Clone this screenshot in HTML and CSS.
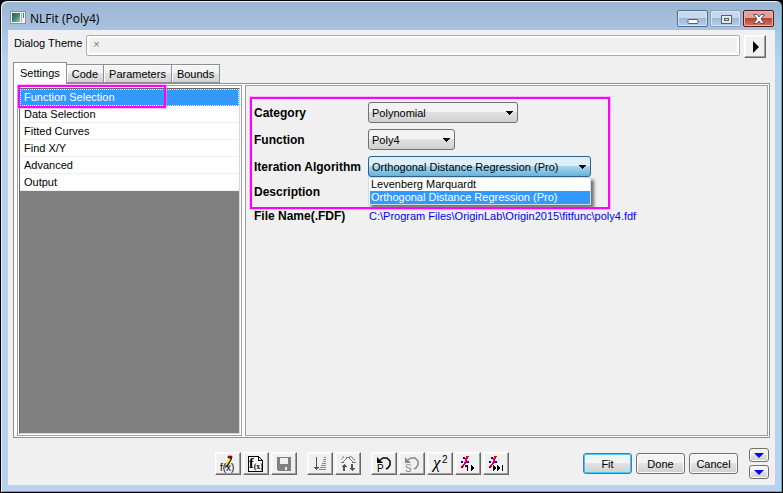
FILE: index.html
```
<!DOCTYPE html>
<html lang="en">
<head>
<meta charset="utf-8">
<title>NLFit (Poly4)</title>
<link rel="stylesheet" href="styles.css">
</head>
<body>
<div class="window">
  <header class="titlebar">
    <svg class="app-icon" width="16" height="13" viewBox="0 0 16 13" shape-rendering="crispEdges">
      <defs><linearGradient id="scene" x2="1" y2="1"><stop offset="0" stop-color="#245a78"/><stop offset=".5" stop-color="#3d8a73"/><stop offset="1" stop-color="#9ccf9a"/></linearGradient></defs>
      <path fill="#f4f4f4" stroke="#8a949c" d="M.5.5h15v12H.5z"/>
      <path fill="url(#scene)" d="M2 2h8v9H2z"/>
      <path fill="#3d7c80" d="M13 2h1v5h-1z"/><path fill="#b0b0b0" d="M11 2h1v9h-1z"/>
    </svg>
    <h1 class="title">NLFit (Poly4)</h1>
    <div class="caption-buttons">
      <button class="caption" aria-label="Minimize"><svg width="12" height="12" viewBox="0 0 12 12"><rect x="1" y="6.500" width="10" height="4" rx="1" fill="#fff" stroke="#555b68"/></svg></button>
      <button class="caption faded" aria-label="Maximize"><svg width="12" height="12" viewBox="0 0 12 12" shape-rendering="crispEdges"><path fill="#555f72" fill-rule="evenodd" d="M1 2h11v9H1zM2 3v7h9V3z"/><path fill="#e6eaf0" fill-rule="evenodd" d="M2 3h9v7H2zM4 5v3h5V5z"/><path fill="#555f72" d="M4 5h5v3H4z"/><path fill="#c9d8e8" d="M5 6h3v1H5z"/></svg></button>
      <button class="caption close" aria-label="Close"><svg width="12" height="12" viewBox="0 0 12 12"><path fill="#fff" stroke="#585466" d="M.5 1.500h3.500l2 2.500 2-2.500h3.500L8 6l3.500 4.500H8L6 8l-2 2.500H.5L4 6z"/></svg></button>
    </div>
  </header>
  <main class="client">
    <div class="theme-row">
      <label for="theme">Dialog Theme</label>
      <input id="theme" class="theme-field" value="×" readonly>
      <button class="tool theme-menu" aria-label="Theme menu"><svg width="7" height="12" viewBox="0 0 7 12"><path d="M1 0l6 6-6 6z"/></svg></button>
    </div>
    <nav class="tabs">
      <button class="tab active">Settings</button>
      <button class="tab">Code</button>
      <button class="tab">Parameters</button>
      <button class="tab">Bounds</button>
    </nav>
    <section class="pane">
      <div class="list-frame">
        <ul class="pages">
          <li class="selected">Function Selection</li>
          <li>Data Selection</li>
          <li>Fitted Curves</li>
          <li>Find X/Y</li>
          <li>Advanced</li>
          <li>Output</li>
        </ul>
        <span class="mark mark-page"></span>
      </div>
      <form class="details">
        <label for="category">Category</label>
        <div><select id="category" class="combo medium"><option>Polynomial</option></select></div>
        <label for="function">Function</label>
        <div><select id="function" class="combo short"><option>Poly4</option></select></div>
        <label for="algorithm">Iteration Algorithm</label>
        <div class="open-combo">
          <select id="algorithm" class="combo long"><option>Orthogonal Distance Regression (Pro)</option><option>Levenberg Marquardt</option></select>
          <ul class="choices">
            <li>Levenberg Marquardt</li>
            <li class="selected">Orthogonal Distance Regression (Pro)</li>
          </ul>
        </div>
        <span class="name">Description</span>
        <span></span>
        <span class="name">File Name(.FDF)</span>
        <span class="path">C:\Program Files\OriginLab\Origin2015\fitfunc\poly4.fdf</span>
        <span class="mark mark-form"></span>
      </form>
    </section>
    <footer class="footer">
      <div class="tools">
        <button class="tool" aria-label="Edit function"><svg width="18" height="18" viewBox="0 0 18 18"><text x="1" y="16" class="fx">f(x)</text><path d="M12 2l-5 7-1 4 3-2 4-7z"/><path fill="#ffe800" d="M10 4h2l-4 6-1 1V8z"/><path fill="#d00" stroke="#000" stroke-width=".5" d="M9 1h4v2H9z"/></svg></button>
        <button class="tool" aria-label="New function"><svg width="18" height="18" viewBox="0 0 18 18" shape-rendering="crispEdges"><path fill="#fff" stroke="#000" d="M1.500 1.500h10l4 4v11h-14zM11.500 1.500v4h4"/><text x="2" y="13" class="fx-bold">f<tspan class="fx-small" dy="1">(x)</tspan></text></svg></button>
        <button class="tool" aria-label="Save"><svg width="18" height="18" viewBox="0 0 18 18" shape-rendering="crispEdges"><path fill="#808080" fill-rule="evenodd" d="M2 2h14v14H3l-1-1zM5 3v6h8V3zM10 12v3h2v-3z"/></svg></button>
        <button class="tool group" aria-label="Sort"><svg width="18" height="18" viewBox="0 0 18 18" shape-rendering="crispEdges"><path fill="#555" d="M5 2h1v10h2v1H7v1H6v1H5v-1H4v-1H3v-1h2z"/><path stroke="#888" d="M13 2.500h2M12 4.500h3M12 6.500h3M11 8.500h4M10 10.500h5M9 12.500h6M8 14.500h7"/></svg></button>
        <button class="tool" aria-label="Find peaks"><svg width="18" height="18" viewBox="0 0 18 18" shape-rendering="crispEdges"><path fill="none" stroke="#777" d="M2 7.500h2l4-5h2l4 5h3"/><path fill="none" stroke="#aaa" d="M10 1.500h2l4 4M5 1.500L2 5"/><path fill="#555" d="M5 9l3 3H6v4H4v-4H2zM13 16l-3-3h2V9h2v4h2z"/></svg></button>
        <button class="tool group" aria-label="Revert parameters"><svg width="18" height="18" viewBox="0 0 18 18"><path fill="none" stroke="#000" stroke-width="1.500" d="M5 5l3-2h4l3 3v4l-2 3-2 1"/><path d="M2 2v6h6z"/><text x="2" y="17" class="letter">P</text></svg></button>
        <button class="tool disabled" aria-label="Revert settings"><svg width="18" height="18" viewBox="0 0 18 18"><path fill="none" stroke="#888" stroke-width="1.500" d="M5 5l3-2h4l3 3v4l-2 3-2 1"/><path fill="#888" d="M2 2v6h6z"/><text x="2" y="17" class="letter">S</text></svg></button>
        <button class="tool" aria-label="Chi-square"><svg width="18" height="18" viewBox="0 0 18 18"><text x="2" y="13" class="chi">χ</text><text x="11" y="8" class="exponent">2</text></svg></button>
        <button class="tool" aria-label="One iteration"><svg width="18" height="18" viewBox="0 0 18 18" shape-rendering="crispEdges"><path fill="#00f" d="M4 2h2v2H4zM2 6h2v2H2zM8 6h2v2H8zM2 11h2v2H2zM6 10h2v2H6z"/><path fill="none" stroke="#f00018" stroke-width="2" d="M9 1L7 4v3L3 12"/><path d="M8 10h1v6H8zM12 10l4 3-4 3z"/></svg></button>
        <button class="tool" aria-label="Fit until converged"><svg width="18" height="18" viewBox="0 0 18 18" shape-rendering="crispEdges"><path fill="#00f" d="M4 2h2v2H4zM2 6h2v2H2zM8 6h2v2H8zM2 11h2v2H2z"/><path fill="none" stroke="#f00018" stroke-width="2" d="M9 1L7 4v3L3 12"/><path d="M6 10l4 3-4 3zM10 10l4 3-4 3zM15 10h1v6h-1z"/></svg></button>
      </div>
      <div class="actions">
        <button class="push default">Fit</button>
        <button class="push">Done</button>
        <button class="push">Cancel</button>
      </div>
      <div class="expanders">
        <button class="push small" aria-label="Expand upper panel"><svg width="10" height="5" viewBox="0 0 10 5"><path fill="#00f" d="M0 0h10L5 5z"/></svg></button>
        <button class="push small" aria-label="Expand lower panel"><svg width="10" height="5" viewBox="0 0 10 5"><path fill="#00f" d="M0 0h10L5 5z"/></svg></button>
      </div>
    </footer>
  </main>
</div>
</body>
</html>
```
FILE: styles.css
```
* { box-sizing: border-box; }
body {
  margin: 0;
  background: #000;
  font: 11px/16px "Liberation Sans", sans-serif;
  color: #000;
}
button, input, select { font: inherit; color: inherit; margin: 0; padding: 0; }
ul { list-style: none; margin: 0; padding: 0; }
svg { display: block; }

.window {
  display: flex;
  flex-direction: column;
  min-height: 100vh;
  padding: 0 7px 7px;
  border: 1px solid #000;
  border-radius: 7px 7px 0 0;
  background: linear-gradient(#9ab5d4, #b9d1ea 60px);
  box-shadow: inset 1px 1px #eaf3fa, inset -1px -1px #35bedb;
}
.titlebar { display: flex; align-items: center; height: 29px; padding: 6px 1px 0 2px; }
.app-icon { margin-bottom: 2px; }
.title { flex: 1; margin: 0 0 0 4px; font: 12px/20px "Open Sans", sans-serif; }
.caption-buttons { display: flex; align-self: flex-start; gap: 2px; margin-top: 3px; }
.caption {
  display: grid;
  place-items: center;
  width: 31px;
  height: 17px;
  border: 1px solid #4f6b90;
  border-radius: 2px;
  background: linear-gradient(#c5d8ee 45%, #9db8d6 50%, #b7cfe9);
  box-shadow: inset 0 0 0 1px #d8e6f5;
}
.faded { border-color: #8aa0bb; }
.close {
  border-color: #551a20;
  background: linear-gradient(#e0a296 45%, #bd412e 50%, #d27a62);
  box-shadow: inset 0 0 0 1px #e8b5ab;
}

.client { display: flex; flex: 1; flex-direction: column; padding: 5px; background: #f0f0f0; }
.theme-row { display: flex; gap: 4px; padding: 0 4px 0 1px; }
.theme-row label { flex: 0 0 68px; white-space: nowrap; }
.theme-field {
  flex: 1;
  min-width: 0;
  height: 21px;
  padding: 0 6px 4px;
  border: 1px solid #adadad;
  border-radius: 2px;
  background: #f0f0f0;
  box-shadow: inset 0 0 0 2px #fff;
  color: #777;
}
.tool {
  display: grid;
  place-items: center;
  width: 26px;
  height: 23px;
  border: 1px solid;
  border-color: #fff #696969 #696969 #fff;
  background: #f0f0f0;
  box-shadow: inset -1px -1px #a0a0a0, inset 1px 1px #f8f8f8;
}
.theme-menu { width: 22px; }

.tabs { display: flex; align-items: flex-end; height: 21px; margin-top: 4px; }
.tab {
  height: 19px;
  padding: 0 5px;
  border: 1px solid #8d8f94;
  border-left-width: 0;
  background: linear-gradient(#f3f3f3 45%, #e2e2e2 50%, #d2d2d2);
  box-shadow: inset 1px 1px #fff;
}
.active {
  position: relative;
  height: 22px;
  margin-bottom: -1px;
  padding: 0 6px 2px;
  border-width: 1px 1px 0;
  background: #fff;
}
.pane {
  display: flex;
  flex: 1;
  gap: 3px;
  padding: 1px;
  padding-left: 3px;
  border: 1px solid #8d8f94;
  background: #fff;
}
.list-frame {
  position: relative;
  flex: 0 0 225px;
  padding: 2px 1px 1px;
  border: 1px solid #a0a0a0;
}
.pages {
  height: 100%;
  border: 1px solid;
  border-color: #696969 #d8d8d8 #d8d8d8 #696969;
  background: #808080;
}
.pages li {
  height: 17px;
  padding-left: 4px;
  border-bottom: 1px solid #f0f0f0;
  background: #fff;
}
.pages .selected { border: 1px dotted #fff; padding-left: 3px; line-height: 15px; background: #39f; color: #fff; }

.details {
  position: relative;
  display: grid;
  flex: 1;
  grid-template-columns: 114px 1fr;
  grid-template-rows: 27px 27px 27px 24px 24px;
  align-items: center;
  align-content: start;
  padding: 13px 8px;
  border: 1px solid #a0a0a0;
  background: #f0f0f0;
}
.details label, .name { font: bold 12px/16px "Liberation Sans", sans-serif; white-space: nowrap; }
.combo {
  display: block;
  appearance: none;
  height: 21px;
  padding: 0 16px 0 3px;
  border: 1px solid #707070;
  border-radius: 3px;
  background:
    linear-gradient(#000, #000) right 4px top 8px / 7px 1px no-repeat,
    linear-gradient(#000, #000) right 5px top 9px / 5px 1px no-repeat,
    linear-gradient(#000, #000) right 6px top 10px / 3px 1px no-repeat,
    linear-gradient(#000, #000) right 7px top 11px / 1px 1px no-repeat,
    linear-gradient(#f3f3f3 45%, #e0e0e0 50%, #d0d0d0);
}
.medium { width: 150px; }
.short { width: 87px; }
.long {
  width: 223px;
  border-color: #2c628b;
  background:
    linear-gradient(#000, #000) right 4px top 8px / 7px 1px no-repeat,
    linear-gradient(#000, #000) right 5px top 9px / 5px 1px no-repeat,
    linear-gradient(#000, #000) right 6px top 10px / 3px 1px no-repeat,
    linear-gradient(#000, #000) right 7px top 11px / 1px 1px no-repeat,
    linear-gradient(#dceffa 45%, #a5d5ef 50%, #68b3db);
}
.open-combo { position: relative; }
.choices {
  position: absolute;
  z-index: 1;
  top: 21px;
  left: 0;
  width: 223px;
  padding: 0 0 0 1px;
  border: 1px solid #d5dbe5;
  background: #fff;
  box-shadow: 3px 3px 3px #0008;
}
.choices li { height: 13px; padding-left: 1px; line-height: 13px; white-space: nowrap; }
.choices .selected { background: #39f; color: #fff; }
.path { color: #00f; padding-left: 1px; }

.mark { position: absolute; z-index: 2; border: 2px solid #f0f; outline: 1px solid #ff8cff88; pointer-events: none; }
.mark-page { top: -1px; left: 0; width: 148px; height: 23px; }
.mark-form { top: 11px; left: 4px; width: 360px; height: 112px; }

.footer { display: flex; justify-content: flex-end; align-items: center; height: 42px; padding: 9px 1px 0 0; }
.tools { display: flex; gap: 2px; margin-right: 74px; }
.tools .group { margin-left: 8px; }
.actions { display: flex; gap: 4px; margin-right: 11px; }
.push {
  width: 49px;
  height: 21px;
  border: 1px solid #707070;
  border-radius: 3px;
  background: linear-gradient(#f3f3f3 45%, #e2e2e2 50%, #d0d0d0);
  box-shadow: inset 0 0 0 1px #fafafa;
}
.default { border-color: #3c7fb1; box-shadow: inset 0 0 0 1px #3fc8f4; }
.expanders { display: grid; gap: 3px; }
.small { display: grid; place-items: center; width: 20px; height: 14px; }

.fx { font: 10px "Liberation Sans", sans-serif; }
.fx-bold { font: bold 14px "Liberation Serif", serif; }
.fx-small { font: bold 8px "Liberation Serif", serif; }
.letter { font: 10px "Liberation Sans", sans-serif; }
.disabled text { fill: #888; }
.chi { font: italic 17px "Liberation Serif", serif; }
.exponent { font: 10px "Liberation Sans", sans-serif; }
```
